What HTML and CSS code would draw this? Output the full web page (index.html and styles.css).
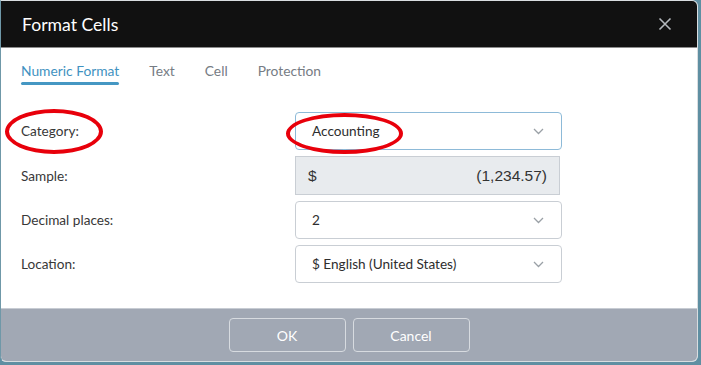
FILE: index.html
```html
<!DOCTYPE html>
<html>
<head>
    <title>Format Cells</title>
    <link rel="stylesheet" href="styles.css">
</head>
<body>
    <div class="dialog">
        <div class="dialog-header">
            <h1>Format Cells</h1>
            <button class="close-button" aria-label="Close">
                <svg width="14" height="14" viewBox="0 0 14 14">
                    <path d="M1.5 1.5 L12.5 12.5 M12.5 1.5 L1.5 12.5" stroke="#b4b8bd" stroke-width="1.6" fill="none"/>
                </svg>
            </button>
        </div>

        <!-- Tabs -->
        <ul class="tabs">
            <li class="tab active">Numeric Format</li>
            <li class="tab">Text</li>
            <li class="tab">Cell</li>
            <li class="tab">Protection</li>
        </ul>

        <!-- Form rows -->
        <div class="form">
            <label class="form-label">Category:</label>
            <div class="select focused">
                <span>Accounting</span>
                <svg class="chevron" width="11" height="7" viewBox="0 0 11 7"><polyline points="1,1 5.5,5.5 10,1" stroke="#9aa0a6" stroke-width="1.3" fill="none"/></svg>
            </div>

            <label class="form-label">Sample:</label>
            <div class="sample">
                <span>$</span>
                <span>(1,234.57)</span>
            </div>

            <label class="form-label">Decimal places:</label>
            <div class="select">
                <span>2</span>
                <svg class="chevron" width="11" height="7" viewBox="0 0 11 7"><polyline points="1,1 5.5,5.5 10,1" stroke="#9aa0a6" stroke-width="1.3" fill="none"/></svg>
            </div>

            <label class="form-label">Location:</label>
            <div class="select">
                <span>$ English (United States)</span>
                <svg class="chevron" width="11" height="7" viewBox="0 0 11 7"><polyline points="1,1 5.5,5.5 10,1" stroke="#9aa0a6" stroke-width="1.3" fill="none"/></svg>
            </div>
        </div>

        <div class="dialog-footer">
            <button class="footer-button">OK</button>
            <button class="footer-button">Cancel</button>
        </div>

        <!-- red annotation marks -->
        <div class="mark mark-category"></div>
        <div class="mark mark-accounting"></div>
    </div>
</body>
</html>
```

FILE: styles.css
```css
* {
    margin: 0px;
    padding: 0px;
    box-sizing: border-box;
    font-family: 'Lato', sans-serif;
}

body {
    background-color: #5f8fa2;
    width: 701px;
    height: 365px;
    overflow: hidden;
}

.dialog {
    position: relative;
    width: 698px;
    height: 362px;
    background-color: #ffffff;
    border: 1px solid #d9dde0;
    border-left-color: #6f98a8;
    border-radius: 0 6px 6px 6px;
    overflow: hidden;
    display: flex;
    flex-direction: column;
}

.dialog-header {
    height: 47px;
    background-color: #111111;
    border-bottom: 1px solid #8c8c8c;
    display: flex;
    align-items: center;
    justify-content: space-between;
    padding: 0 25px 0 21px;
    flex-shrink: 0;
}

.dialog-header h1 {
    color: #ffffff;
    font-size: 17.6px;
    font-weight: normal;
}

.close-button {
    background: none;
    border: none;
    display: flex;
    cursor: pointer;
}

.tabs {
    list-style: none;
    display: flex;
    gap: 30px;
    padding: 13px 0 0 20px;
}

.tab {
    font-size: 13.8px;
    line-height: 20px;
    color: #767c84;
    padding-bottom: 4px;
}

.tab.active {
    color: #3f92c1;
    position: relative;
}

.tab.active::after {
    content: "";
    position: absolute;
    left: 0;
    right: 0;
    bottom: 0;
    height: 3px;
    border-radius: 2px;
    background-color: #4597c3;
}

.form {
    display: grid;
    grid-template-columns: 274px 267px;
    row-gap: 6px;
    padding: 27px 0 0 20px;
    align-items: center;
}

.form-label {
    font-size: 13.6px;
    color: #383838;
}

.select {
    height: 38px;
    border: 1px solid #c9ced4;
    border-radius: 4px;
    display: flex;
    align-items: center;
    justify-content: space-between;
    padding: 0 17px 0 16px;
    font-size: 13.6px;
    color: #2e2e2e;
}

.select.focused {
    border-color: #8dbad8;
}

.sample {
    width: 265px;
    height: 39px;
    background-color: #e8ebee;
    border: 1px solid #c9ced4;
    display: flex;
    align-items: center;
    justify-content: space-between;
    padding: 0 12px 0 12px;
    font-size: 15.5px;
    color: #333333;
}

.sample span {
    font-family: 'Liberation Sans', Arial, sans-serif;
}

.dialog-footer {
    margin-top: auto;
    height: 53px;
    background-color: #a1a8b4;
    border-top: 1px solid #c7ccd3;
    display: flex;
    justify-content: center;
    gap: 7px;
    padding-top: 9px;
}

.footer-button {
    width: 117px;
    height: 34px;
    background-color: #a1a8b4;
    border: 1px solid #d7dbe0;
    border-radius: 4px;
    color: #ffffff;
    font-size: 14px;
    cursor: pointer;
}

.mark {
    position: absolute;
    border: 4px solid #e8000b;
    border-radius: 50%;
    pointer-events: none;
}

.mark-category {
    left: 4px;
    top: 108px;
    width: 98px;
    height: 45px;
}

.mark-accounting {
    left: 285px;
    top: 112px;
    width: 117px;
    height: 41px;
}
```
